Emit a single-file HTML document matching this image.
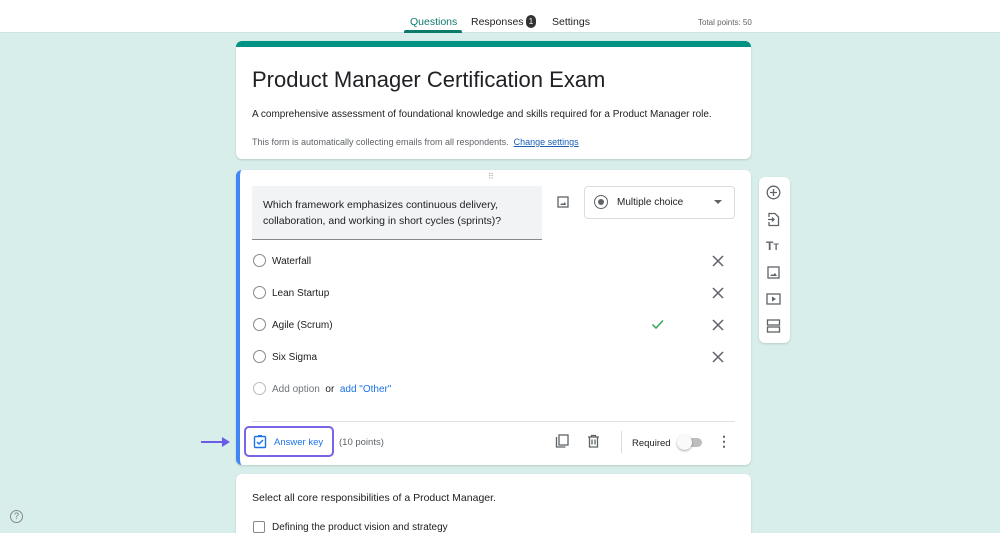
<!DOCTYPE html><html><head><style>
*{box-sizing:border-box;margin:0;padding:0}
html,body{width:1000px;height:533px;overflow:hidden}
body{background:#d8eeea;font-family:"Liberation Sans",Arial,sans-serif;color:#202124;position:relative}
.top{position:absolute;left:0;top:0;width:1000px;height:33px;background:#fff;border-bottom:1px solid #cfe3df}
.tab{position:absolute;top:16px;font-size:10.5px;color:#202124}
.card{position:absolute;background:#fff;border-radius:6px;box-shadow:0 1px 2px rgba(0,0,0,.15)}
.ic{position:absolute}
.radio{position:absolute;left:253px;width:13px;height:13px;border:1.5px solid #888;border-radius:50%}
.opt{position:absolute;left:272px;font-size:10px}
.x{position:absolute;left:712px}
</style></head><body>
<div class="top">
<div class="tab" style="left:410px;color:#0b7a6b">Questions</div>
<div style="position:absolute;left:404px;top:30px;width:58px;height:3px;background:#0b7a6b;border-radius:2px 2px 0 0"></div>
<div class="tab" style="left:471px">Responses</div>
<div style="position:absolute;left:526px;top:15px;width:10px;height:13px;border-radius:5px;background:#333;color:#fff;font-size:8px;text-align:center;line-height:13px">1</div>
<div class="tab" style="left:552px">Settings</div>
<div class="tab" style="left:698px;font-size:8px;top:18px;color:#5f6368">Total points: 50</div>
</div>
<div class="card" style="left:236px;top:41px;width:515px;height:118px;border-top:6px solid #009383">
<div style="position:absolute;left:16px;top:20px;font-size:22px">Product Manager Certification Exam</div>
<div style="position:absolute;left:16px;top:62px;font-size:10px">A comprehensive assessment of foundational knowledge and skills required for a Product Manager role.</div>
<div style="position:absolute;left:16px;top:90px;font-size:9px;color:#5f6368">This form is automatically collecting emails from all respondents. &nbsp;<span style="color:#1a5fb4;text-decoration:underline">Change settings</span></div>
</div>
<div class="card" style="left:236px;top:170px;width:515px;height:295px;border-left:4px solid #4285f4"></div>
<div style="position:absolute;left:488px;top:172px;font-size:8px;color:#aaa;letter-spacing:1px">⠿</div>
<div style="position:absolute;left:252px;top:186px;width:290px;height:54px;background:#f1f3f4;border-bottom:1px solid #888"></div>
<div style="position:absolute;left:263px;top:197px;font-size:10.5px;line-height:16px">Which framework emphasizes continuous delivery,<br>collaboration, and working in short cycles (sprints)?</div>
<svg class="ic" style="left:557px;top:196px" width="12" height="12"><rect x="1" y="1" width="10" height="10" fill="none" stroke="#5f6368" stroke-width="1.3"/><path d="M3 9l2-2 1 1 2-2 1 3z" fill="#5f6368"/></svg>
<div style="position:absolute;left:584px;top:186px;width:151px;height:33px;border:1px solid #dadce0;border-radius:4px"></div>
<div style="position:absolute;left:594px;top:195px;width:14px;height:14px;border:1.5px solid #5f6368;border-radius:50%"><div style="margin:2.5px;width:6px;height:6px;border-radius:50%;background:#5f6368"></div></div>
<div style="position:absolute;left:617px;top:197px;font-size:10px">Multiple choice</div>
<div style="position:absolute;left:714px;top:200px;border:4px solid transparent;border-top:4px solid #5f6368"></div>
<div class="radio" style="top:254px"></div><div class="opt" style="top:256px">Waterfall</div>
<div class="radio" style="top:286px"></div><div class="opt" style="top:288px">Lean Startup</div>
<div class="radio" style="top:318px"></div><div class="opt" style="top:320px">Agile (Scrum)</div>
<svg class="ic" style="left:651px;top:319px" width="14" height="11"><path d="M1.5 5.5l3.5 3.5 7-7.5" fill="none" stroke="#34a853" stroke-width="1.5"/></svg>
<div class="radio" style="top:350px"></div><div class="opt" style="top:352px">Six Sigma</div>
<svg class="x" style="top:255px" width="12" height="12"><path d="M1 1l10 10M11 1L1 11" stroke="#5f6368" stroke-width="1.5"/></svg>
<svg class="x" style="top:287px" width="12" height="12"><path d="M1 1l10 10M11 1L1 11" stroke="#5f6368" stroke-width="1.5"/></svg>
<svg class="x" style="top:319px" width="12" height="12"><path d="M1 1l10 10M11 1L1 11" stroke="#5f6368" stroke-width="1.5"/></svg>
<svg class="x" style="top:351px" width="12" height="12"><path d="M1 1l10 10M11 1L1 11" stroke="#5f6368" stroke-width="1.5"/></svg>
<div class="radio" style="top:382px;border-color:#bbb"></div><div class="opt" style="top:384px;color:#70757a">Add option <span style="color:#202124">&nbsp;or&nbsp;</span> <span style="color:#1a73e8">add "Other"</span></div>
<div style="position:absolute;left:252px;top:421px;width:483px;height:1px;background:#e0e0e0"></div>
<div style="position:absolute;left:201px;top:441px;width:24px;height:2px;background:#6b5ce7"></div>
<div style="position:absolute;left:222px;top:437px;border:5px solid transparent;border-left:8px solid #6b5ce7"></div>
<div style="position:absolute;left:244px;top:426px;width:90px;height:31px;border:2px solid #7b63e6;border-radius:5px"></div>
<svg class="ic" style="left:253px;top:434px" width="14" height="15"><rect x="1.5" y="2.5" width="11" height="11" fill="none" stroke="#1a73e8" stroke-width="1.4" rx="1"/><path d="M4 8l2 2 4-4" fill="none" stroke="#1a73e8" stroke-width="1.4"/><rect x="5" y="1" width="4" height="2" fill="#1a73e8"/></svg>
<div style="position:absolute;left:274px;top:437px;font-size:9.5px;color:#1a73e8">Answer key</div>
<div style="position:absolute;left:339px;top:437px;font-size:9.5px;color:#5f6368">(10 points)</div>
<svg class="ic" style="left:555px;top:434px" width="14" height="14"><rect x="4" y="1" width="9" height="10" fill="none" stroke="#5f6368" stroke-width="1.3"/><path d="M1.5 3v10h9" fill="none" stroke="#5f6368" stroke-width="1.3"/></svg>
<svg class="ic" style="left:587px;top:434px" width="13" height="14"><path d="M1 3h11M4.5 3V1.5h4V3M2.5 3v10h8V3M5 5.5v5M8 5.5v5" fill="none" stroke="#5f6368" stroke-width="1.3"/></svg>
<div style="position:absolute;left:621px;top:431px;width:1px;height:22px;background:#dadce0"></div>
<div style="position:absolute;left:632px;top:438px;font-size:9.5px">Required</div>
<div style="position:absolute;left:680px;top:438px;width:22px;height:9px;border-radius:5px;background:#bdbdbd"></div>
<div style="position:absolute;left:677px;top:435px;width:15px;height:15px;border-radius:50%;background:#fafafa;box-shadow:0 1px 2px rgba(0,0,0,.35)"></div>
<div style="position:absolute;left:717px;top:434px;font-size:14px;color:#5f6368;line-height:14px;font-weight:bold">⋮</div>
<div class="card" style="left:759px;top:177px;width:31px;height:166px"></div>
<svg class="ic" style="left:766px;top:185px" width="15" height="15"><circle cx="7.5" cy="7.5" r="6.3" fill="none" stroke="#5f6368" stroke-width="1.3"/><path d="M7.5 4v7M4 7.5h7" stroke="#5f6368" stroke-width="1.3"/></svg>
<svg class="ic" style="left:767px;top:212px" width="13" height="15"><path d="M2 5V1.5h6l3.5 3.5v8.5H2V10M1 7.5h6M5 5.5l2 2-2 2" fill="none" stroke="#5f6368" stroke-width="1.3"/></svg>
<div style="position:absolute;left:766px;top:239px;font-size:12px;font-weight:bold;color:#5f6368">T<span style="font-size:9px">T</span></div>
<svg class="ic" style="left:767px;top:266px" width="13" height="13"><rect x="1" y="1" width="11" height="11" fill="none" stroke="#5f6368" stroke-width="1.3"/><path d="M3 10l2-2 1 1 2-2 2 3z" fill="#5f6368"/></svg>
<svg class="ic" style="left:766px;top:293px" width="15" height="12"><rect x="1" y="1" width="13" height="10" fill="none" stroke="#5f6368" stroke-width="1.3"/><path d="M6 3.5v5l4-2.5z" fill="#5f6368"/></svg>
<svg class="ic" style="left:766px;top:319px" width="15" height="14"><rect x="1.5" y="1" width="12" height="5" fill="none" stroke="#5f6368" stroke-width="1.3"/><rect x="1.5" y="8" width="12" height="5" fill="none" stroke="#5f6368" stroke-width="1.3"/></svg>
<div class="card" style="left:236px;top:474px;width:515px;height:70px">
<div style="position:absolute;left:16px;top:18px;font-size:10.5px">Select all core responsibilities of a Product Manager.</div>
<div style="position:absolute;left:17px;top:47px;width:12px;height:12px;border:1.5px solid #888;border-radius:2px"></div>
<div style="position:absolute;left:36px;top:48px;font-size:10px">Defining the product vision and strategy</div>
</div>
<div style="position:absolute;left:10px;top:510px;width:13px;height:13px;border:1.2px solid #888;border-radius:50%;font-size:9px;color:#777;text-align:center;line-height:11px">?</div>
</body></html>
